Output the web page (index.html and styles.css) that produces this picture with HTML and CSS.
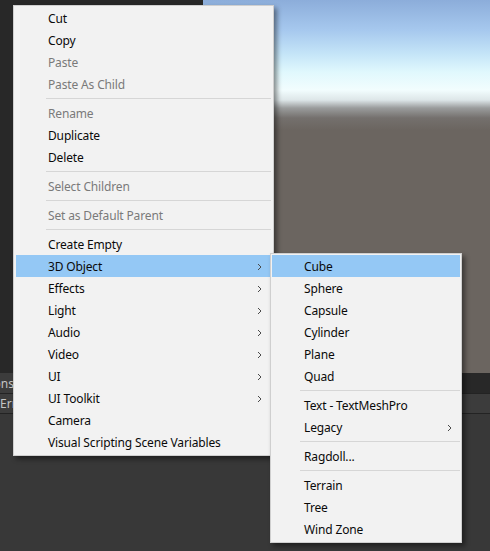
FILE: index.html
```html
<!DOCTYPE html>
<html>
<head>
<meta charset="utf-8">
<link rel="stylesheet" href="styles.css">
</head>
<body>
<div class="editor">
  <div class="hierarchy"></div>
  <div class="scene"></div>
  <div class="tabbar"><span class="tab-text console">Console</span></div>
  <div class="toolbar"><span class="tab-text">Error Pause</span></div>
  <div class="console-body"></div>
</div>

<div class="menu main-menu">
  <div class="item">Cut</div>
  <div class="item">Copy</div>
  <div class="item disabled">Paste</div>
  <div class="item disabled">Paste As Child</div>
  <div class="sep"></div>
  <div class="item disabled">Rename</div>
  <div class="item">Duplicate</div>
  <div class="item">Delete</div>
  <div class="sep"></div>
  <div class="item disabled">Select Children</div>
  <div class="sep"></div>
  <div class="item disabled">Set as Default Parent</div>
  <div class="sep"></div>
  <div class="item">Create Empty</div>
  <div class="item active">3D Object<svg class="arrow" viewBox="0 0 5 8"><path d="M1 1 L4 4 L1 7"/></svg></div>
  <div class="item">Effects<svg class="arrow" viewBox="0 0 5 8"><path d="M1 1 L4 4 L1 7"/></svg></div>
  <div class="item">Light<svg class="arrow" viewBox="0 0 5 8"><path d="M1 1 L4 4 L1 7"/></svg></div>
  <div class="item">Audio<svg class="arrow" viewBox="0 0 5 8"><path d="M1 1 L4 4 L1 7"/></svg></div>
  <div class="item">Video<svg class="arrow" viewBox="0 0 5 8"><path d="M1 1 L4 4 L1 7"/></svg></div>
  <div class="item">UI<svg class="arrow" viewBox="0 0 5 8"><path d="M1 1 L4 4 L1 7"/></svg></div>
  <div class="item">UI Toolkit<svg class="arrow" viewBox="0 0 5 8"><path d="M1 1 L4 4 L1 7"/></svg></div>
  <div class="item">Camera</div>
  <div class="item">Visual Scripting Scene Variables</div>
</div>

<div class="menu sub-menu">
  <div class="item active">Cube</div>
  <div class="item">Sphere</div>
  <div class="item">Capsule</div>
  <div class="item">Cylinder</div>
  <div class="item">Plane</div>
  <div class="item">Quad</div>
  <div class="sep"></div>
  <div class="item">Text - TextMeshPro</div>
  <div class="item">Legacy<svg class="arrow" viewBox="0 0 5 8"><path d="M1 1 L4 4 L1 7"/></svg></div>
  <div class="sep"></div>
  <div class="item">Ragdoll...</div>
  <div class="sep"></div>
  <div class="item">Terrain</div>
  <div class="item">Tree</div>
  <div class="item">Wind Zone</div>
</div>
</body>
</html>
```

FILE: styles.css
```css
html, body {
  margin: 0;
  padding: 0;
}
body {
  width: 490px;
  height: 551px;
  overflow: hidden;
  background: #383838;
  font-family: "Noto Sans", "Open Sans", sans-serif;
  font-size: 12px;
  position: relative;
}
.editor {
  display: grid;
  grid-template-columns: 203px 1fr;
  grid-template-rows: 373px 20px 21px 1fr;
  width: 490px;
  height: 551px;
}
.hierarchy {
  background: #282828;
}
.scene {
  background: linear-gradient(to bottom,
    #8cadda 0px,
    #a6c8ee 30px,
    #c6e6f8 55px,
    #e0f8fd 72px,
    #f2fdfe 90px,
    #dde6e8 100px,
    #9a9c9c 108px,
    #74706d 118px,
    #6b6560 130px,
    #6b6560 373px);
}
.tabbar {
  grid-column: 1 / 3;
  background: #282828;
  display: flex;
  align-items: center;
  overflow: hidden;
}
.toolbar {
  grid-column: 1 / 3;
  background: #3c3c3c;
  border-top: 1px solid #232323;
  border-bottom: 1px solid #232323;
  display: flex;
  align-items: center;
  overflow: hidden;
}
.console-body {
  grid-column: 1 / 3;
  background: #383838;
}
.tab-text {
  color: #c4c4c4;
  font-size: 12px;
  white-space: nowrap;
}
.tab-text.console {
  margin-left: -14px;
  background: #3c3c3c;
  padding: 2px 6px 2px 0;
}

.menu {
  position: absolute;
  background: #f2f2f2;
  border: 1px solid #cfcfcf;
  box-shadow: 3px 3px 5px rgba(0, 0, 0, 0.45);
  box-sizing: border-box;
}
.main-menu {
  left: 13px;
  top: 5px;
  width: 261px;
  padding: 1px 2px 2px 2px;
}
.sub-menu {
  left: 270px;
  top: 253px;
  width: 192px;
  padding: 1px 1px 2px 1px;
}
.item {
  box-sizing: border-box;
  height: 22px;
  line-height: 20px;
  padding-top: 2px;
  padding-left: 32px;
  padding-right: 9px;
  color: #0a0a0a;
  letter-spacing: -0.15px;
  white-space: nowrap;
  display: flex;
  align-items: center;
  justify-content: space-between;
}
.item.disabled {
  color: #7a7a7a;
}
.item.active {
  background: #94c8f5;
}
.arrow {
  width: 5px;
  height: 8px;
  fill: none;
  stroke: #4a4a4a;
  stroke-width: 1;
}
.sub-menu .item {
  padding-right: 8px;
}
.sep {
  height: 1px;
  background: #d6d6d6;
  margin: 3px 0 3px 30px;
}
.sub-menu .sep {
  margin: 3px 0 3px 28px;
}
```
